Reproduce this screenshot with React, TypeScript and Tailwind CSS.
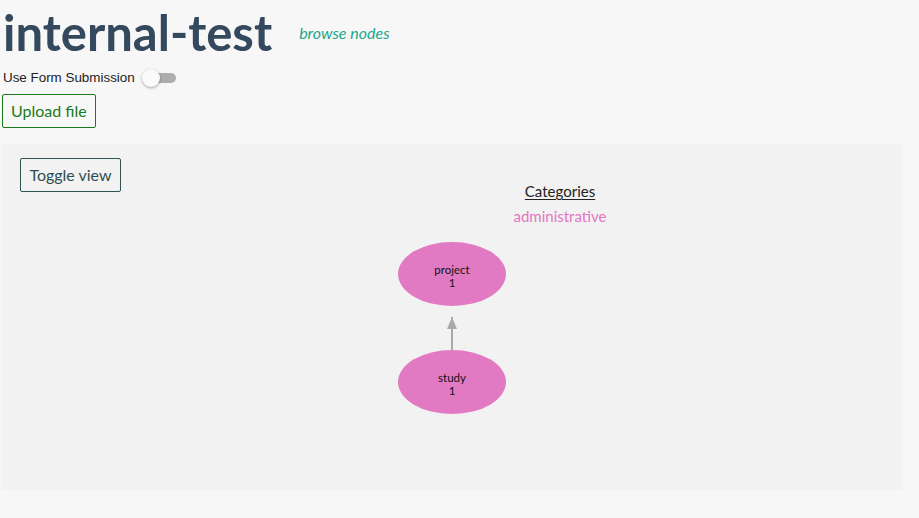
import React from 'react';

const lato = { fontFamily: 'Lato, "Open Sans", sans-serif' };

const nodes = [
  { id: 'project', count: 1, cx: 226, cy: 47 },
  { id: 'study', count: 1, cx: 226, cy: 155 },
];

const Graph = () => (
  <svg width={452} height={200} viewBox="0 0 452 200" className="block" style={lato}>
    <line x1={226} y1={123} x2={226} y2={90} stroke="#aaaaaa" strokeWidth={2} />
    <polygon points="226,90 221,102 231,102" fill="#aaaaaa" />
    {nodes.map((n) => (
      <g key={n.id}>
        <ellipse cx={n.cx} cy={n.cy} rx={54} ry={32} fill="#e17ac3" />
        <text x={n.cx} y={n.cy} textAnchor="middle" fontSize={11.5} fill="#111">
          {n.id}
        </text>
        <text x={n.cx} y={n.cy + 12.5} textAnchor="middle" fontSize={11.5} fill="#111">
          {n.count}
        </text>
      </g>
    ))}
  </svg>
);

export default function App() {
  return (
    <div className="min-h-[518px] w-full bg-[#f7f7f7] pt-[3px]">
      {/* header */}
      <div className="flex items-center pl-[3px]">
        <h1 className="text-[49px] font-bold leading-[58px] text-[#34495e]" style={lato}>
          internal-test
        </h1>
        <a className="ml-[27px] mt-[2px] text-[16px] italic text-[#1fa58a]" style={lato}>
          browse nodes
        </a>
      </div>

      <div className="mt-[7px] flex items-center pl-[3px]">
        <span className="text-[13.4px] text-[#222]" style={{ fontFamily: '"Liberation Sans", Arial, sans-serif' }}>
          Use Form Submission
        </span>
        <div className="relative ml-[7px] h-[18px] w-[34px]">
          <div className="absolute left-[9px] top-[4px] h-[10px] w-[25px] rounded-full bg-[#adadad]" />
          <div className="absolute left-0 top-0 h-[18px] w-[18px] rounded-full bg-[#fafafa] shadow-[0_1px_3px_rgba(0,0,0,0.35)]" />
        </div>
      </div>

      <div className="mt-[6px] pl-[2px]">
        <button
          className="h-[34px] rounded-[2px] border border-[#1b7a1b] px-[8px] text-[16px] text-[#1b7a1b]"
          style={lato}
        >
          Upload file
        </button>
      </div>

      {/* graph panel */}
      <div className="ml-[2px] mt-[16px] h-[346px] w-[900px] bg-[#f2f2f2] pl-[18px] pt-[14px]">
        <div className="flex items-start">
          <button
            className="h-[34px] w-[101px] rounded-[2px] border border-[#2f5353] text-[16px] text-[#2f4f4f]"
            style={lato}
          >
            Toggle view
          </button>
          <div className="ml-[339px] mt-[23px] w-[200px] text-center" style={lato}>
            <div className="text-[15px] leading-[20px] text-[#222] underline underline-offset-2">Categories</div>
            <div className="mt-[5px] text-[15px] leading-[20px] text-[#e377c2]">administrative</div>
          </div>
        </div>
        <div className="ml-[206px] mt-[1px]">
          <Graph />
        </div>
      </div>
    </div>
  );
}
